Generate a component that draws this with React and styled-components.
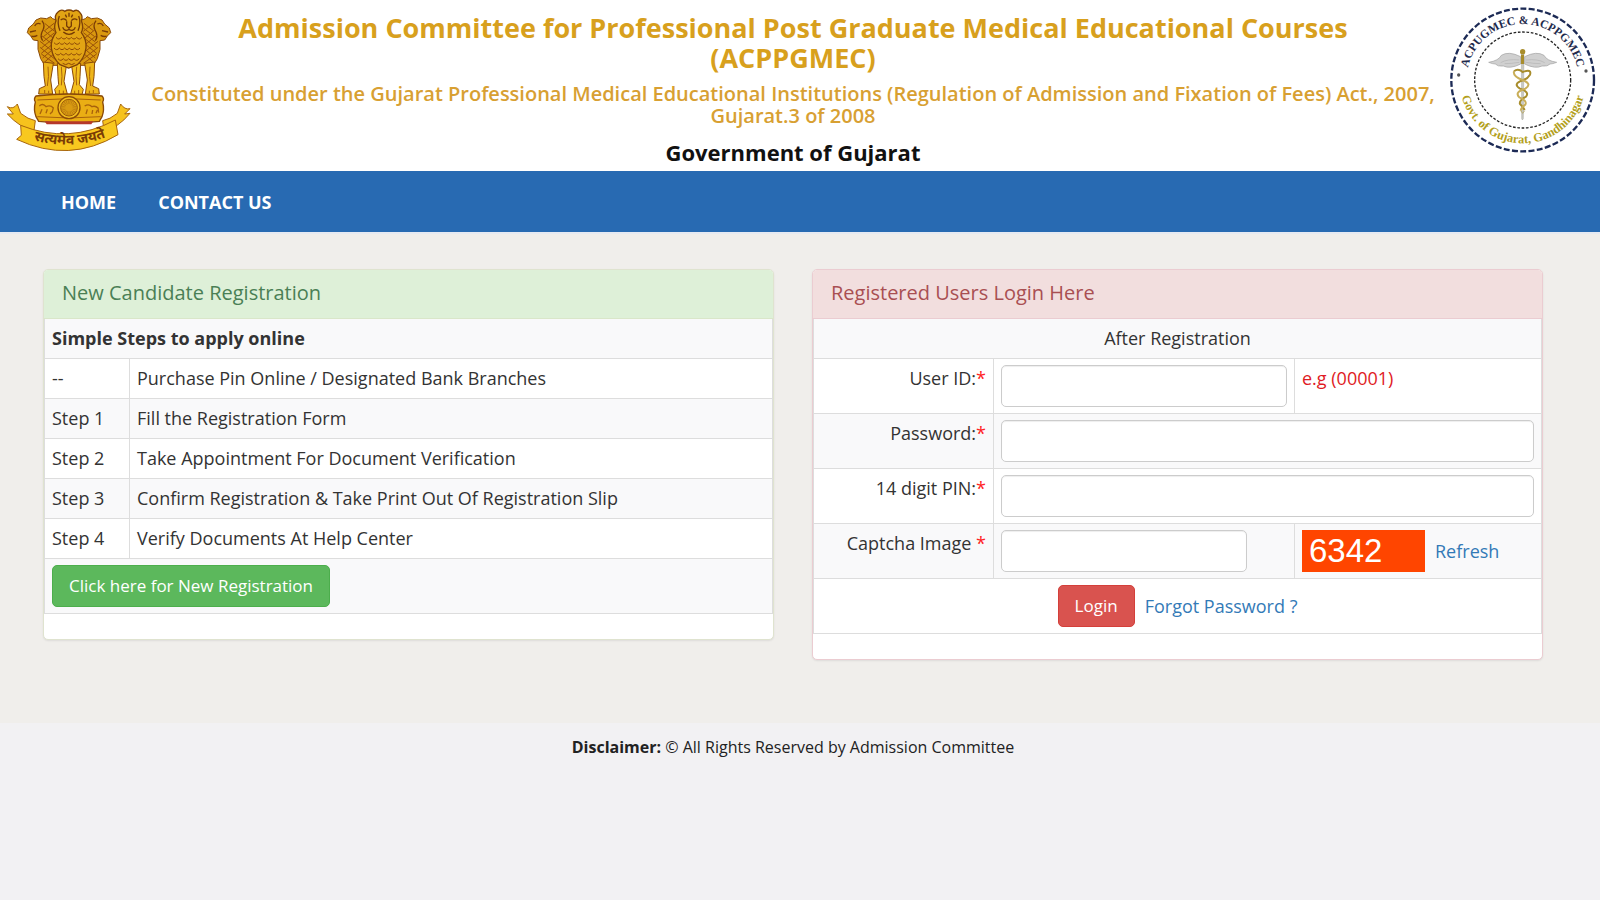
import React from 'react'
import styled, { createGlobalStyle } from 'styled-components'

const GlobalStyle = createGlobalStyle`
  * { box-sizing: border-box; }
  body {
    margin: 0;
    background: #f2f1f3;
    color: #333;
    font-family: "Open Sans", "Noto Sans", sans-serif;
    font-size: 18px;
    line-height: 27px;
  }
  input, button { font: inherit; }
`;

const Header = styled.header`
  display: flex;
  min-height: 171px;
  background: #fff;
`;

const HeaderText = styled.div`
  flex: 1;
  padding: 13px 4px 0 10px;
  text-align: center;
`;

const Title = styled.h1`
  margin: 0;
  padding: 0 20px;
  color: #d8a01d;
  font-size: 27px;
  font-weight: 700;
  line-height: 30px;
`;

const SubTitle = styled.h2`
  margin: 10px 0 0;
  color: #d8a032;
  font-size: 20px;
  font-weight: 550;
  line-height: 22px;
`;

const Government = styled.h3`
  margin: 12px 0 0;
  color: #111;
  font-size: 22px;
  font-weight: 700;
  line-height: 26px;
`;

const Logo = styled.svg`
  flex: none;
  height: 160px;
`;

const Nav = styled.nav`
  display: flex;
  gap: 42px;
  height: 63px;
  padding: 1px 61px 0;
  align-items: center;
  background: #286ab2;
  border-bottom: 2px solid #e6eaf2;
`;

const NavLink = styled.a`
  color: #fff;
  font-size: 18px;
  font-weight: 700;
  text-decoration: none;
`;

const Main = styled.main`
  display: grid;
  grid-template-columns: 1fr 1fr;
  gap: 38px;
  align-items: start;
  padding: 35px 57px 63px 43px;
  background: #f0eeeb;
`;

const Panel = styled.section`
  padding-bottom: 25px;
  background: #fff;
  border: 1px solid ${(p) => p.$line};
  border-radius: 5px;
  box-shadow: 0 1px 2px rgba(0, 0, 0, 0.08);
`;

const PanelTitle = styled.h2`
  margin: 0;
  padding: 9px 18px 12px;
  color: ${(p) => p.$color};
  background: ${(p) => p.$bg};
  border-bottom: 1px solid ${(p) => p.$line};
  border-radius: 4px 4px 0 0;
  font-size: 20px;
  font-weight: 400;
  line-height: 27px;
`;

const Table = styled.table`
  width: 100%;
  table-layout: fixed;
  border-collapse: collapse;

  tr:nth-child(odd) { background: #f9f9fa; }
  tr:first-child > * { border-top: 0; }
`;

const Cell = styled.td`
  padding: 6px 7px;
  border: 1px solid #ddd;
  text-align: ${(p) => p.$align || 'left'};
  vertical-align: top;
  font-weight: 400;
`;

const Star = styled.span`
  color: #f22;
`;

const Hint = styled.span`
  color: #e01b24;
`;

const Input = styled.input`
  display: block;
  width: ${(p) => p.$width || '100%'};
  height: 42px;
  padding: 6px 14px;
  background: #fff;
  border: 1px solid #ccc;
  border-radius: 5px;
  box-shadow: inset 0 1px 1px rgba(0, 0, 0, 0.07);
`;

const Button = styled.button`
  display: block;
  height: 42px;
  padding: 0 16px 2px;
  color: #fff;
  background: ${(p) => (p.$danger ? '#d9534f' : '#5cb85c')};
  border: 1px solid ${(p) => (p.$danger ? '#d43f3a' : '#4cae4c')};
  border-radius: 5px;
  font-size: 17px;
  cursor: pointer;
`;

const Link = styled.a`
  color: #337ab7;
  text-decoration: none;
`;

const Inline = styled.div`
  display: flex;
  gap: 10px;
  align-items: center;
  justify-content: ${(p) => (p.$center ? 'center' : 'flex-start')};
`;

const Captcha = styled.span`
  width: 123px;
  height: 42px;
  padding: 0 7px;
  color: #fff;
  background: #ff4500;
  font-family: "Liberation Sans", Arial, sans-serif;
  font-size: 33px;
  line-height: 42px;
`;

const Footer = styled.footer`
  padding: 11px 14px 24px 0;
  color: #222;
  font-size: 16px;
  text-align: center;
`;

const steps = [
  ['--', 'Purchase Pin Online / Designated Bank Branches'],
  ['Step 1', 'Fill the Registration Form'],
  ['Step 2', 'Take Appointment For Document Verification'],
  ['Step 3', 'Confirm Registration & Take Print Out Of Registration Slip'],
  ['Step 4', 'Verify Documents At Help Center'],
];

// right half of the capital, mirrored for the left one
const SideLion = () => (
  <g>
    <path d="M240 62 L256 56 L262 50 L274 56 L292 54 L306 60 L314 72 L328 84 L332 98 L322 108 L314 120 L300 122 L300 148 L292 176 L280 196 L238 196 Z" fill="#d9980f" stroke="#8a4a08" strokeWidth="3" />
    <path d="M292 72 q12 -6 18 6 M306 92 l18 4 M302 106 q10 6 18 2 M288 62 q-12 16 0 34 q6 14 -2 26" fill="none" stroke="#7a3c06" strokeWidth="4" />
    <path d="M252 70 l28 22 M250 84 l34 26 M250 98 l36 28 M250 112 l40 32 M248 126 l42 34 M246 140 l40 34 M246 156 l34 30 M280 70 l-30 24 M286 88 l-36 30 M290 106 l-42 34 M294 124 l-48 38 M294 142 l-48 38 M290 162 l-40 28" stroke="#9a520a" strokeWidth="3" />
    <path d="M254 190 L284 186 L282 230 L278 258 L296 266 L298 282 L256 282 L262 240 Z" fill="#eeb51a" stroke="#8a4a08" strokeWidth="3" />
    <path d="M270 200 q-4 30 2 58 M268 272 v8 M280 270 v10" fill="none" stroke="#a8620c" strokeWidth="3" />
    <path d="M214 192 L242 190 L240 230 L238 254 L250 268 L246 284 L212 282 L222 244 Z" fill="#f4c01e" stroke="#8a4a08" strokeWidth="3" />
    <path d="M230 200 q-4 30 0 56 M224 272 v10 M236 270 v12" fill="none" stroke="#a8620c" strokeWidth="3" />
  </g>
);

const Emblem = () => (
  <Logo width="140" viewBox="0 0 420 480" role="img" aria-label="State Emblem of India">
    <SideLion />
    <g transform="translate(414 0) scale(-1 1)"><SideLion /></g>
    <path d="M174 36 q10 -10 20 -2 q13 -8 26 0 q12 -8 20 4 q10 10 4 24 q8 20 0 36 q16 20 14 46 q-4 30 -26 50 l-26 10 l-26 -10 q-22 -20 -26 -50 q-2 -26 14 -46 q-8 -18 0 -36 q-6 -16 6 -26 Z" fill="#e2a414" stroke="#7f4207" strokeWidth="4" />
    <path d="M182 60 q10 -8 18 2 M232 60 q-10 -8 -18 2 M200 64 v14 l7 6 7 -6 v-14 M188 82 q6 14 19 6 q13 8 19 -6 M190 96 q17 14 34 0 M178 48 q-8 20 2 44 M236 48 q8 20 -2 44 M196 44 l4 8 M218 44 l-4 8 M207 38 v12" fill="none" stroke="#753a05" strokeWidth="4" />
    <path d="M168 112 q8 10 16 0 q8 10 16 0 q7 10 14 0 q8 10 16 0 q8 10 16 0 M162 128 q8 10 16 0 q8 10 16 0 q8 10 14 0 q8 10 16 0 q8 10 16 0 M162 144 q8 10 16 0 q8 10 16 0 q8 10 14 0 q8 10 16 0 q8 10 16 0 M166 160 q8 10 16 0 q8 10 16 0 q8 10 16 0 q8 10 16 0 q8 10 14 0 M174 176 q8 10 16 0 q8 10 16 0 q8 10 16 0 q8 10 16 0 M188 190 q9 8 18 0 q9 8 18 0" fill="none" stroke="#8d4808" strokeWidth="3" />
    <path d="M108 288 q98 -12 198 0 q8 8 2 18 q6 24 -2 44 l-8 14 q-92 10 -182 0 l-8 -14 q-8 -20 -2 -44 q-6 -10 2 -18 Z" fill="#eaae14" stroke="#8a4a08" strokeWidth="4" />
    <path d="M112 300 q95 -8 190 0 M112 350 q95 8 190 0" fill="none" stroke="#a8620c" strokeWidth="3" />
    <path d="M118 318 q10 -10 20 2 q14 -6 22 4 l-4 14 M120 342 l6 -14 M138 340 l4 -12 M150 342 l8 -8 M254 318 q12 -8 22 2 q10 -4 18 4 l2 14 M258 342 l4 -14 M276 342 l2 -12 M288 340 l4 -10" fill="none" stroke="#a8620c" strokeWidth="4" />
    <circle cx="207" cy="323" r="33" fill="#f2bd1f" stroke="#8a4a08" strokeWidth="4" />
    <circle cx="207" cy="323" r="25" fill="#d99b12" stroke="#9a5a0a" strokeWidth="3" />
    <circle cx="207" cy="323" r="17" fill="none" stroke="#b87a10" strokeWidth="12" strokeDasharray="2 3" />
    <path d="M134 364 h146 l-6 9 h-134 Z" fill="#b5382a" />
    <path d="M52 312 L62 340 Q84 358 106 362 L102 392 Q60 384 22 342 L40 342 L22 320 Q40 330 52 312 Z" fill="#f6c21d" stroke="#a8660c" strokeWidth="3" />
    <path d="M362 312 L352 340 Q330 358 308 362 L312 392 Q354 384 390 340 L374 342 L390 326 Q374 330 362 312 Z" fill="#f6c21d" stroke="#a8660c" strokeWidth="3" />
    <path d="M62 376 Q207 434 346 360 L354 404 Q207 492 50 418 L64 406 Z" fill="#f8c81f" stroke="#a8660c" strokeWidth="3" />
    <path id="motto" d="M66 408 Q207 464 352 398" fill="none" />
    <text fill="#7a3c06" fontSize="42" fontWeight="700" fontFamily='"Noto Sans Devanagari", "Noto Sans", sans-serif'>
      <textPath href="#motto" startOffset="50%" textAnchor="middle">सत्यमेव जयते</textPath>
    </text>
  </Logo>
);

const Wing = () => (
  <g>
    <path d="M254 170 Q290 152 312 166 Q320 182 350 187 Q338 192 330 192 Q324 200 306 198 Q286 208 254 192 Z" fill="#d0d0d0" stroke="#a0a0a0" strokeWidth="2" />
    <path d="M258 180 q36 -4 56 8 M258 187 q26 4 44 4" fill="none" stroke="#b4b4b4" strokeWidth="2" />
  </g>
);

const Seal = () => (
  <Logo width="160" viewBox="0 0 480 480" role="img" aria-label="ACPUGMEC and ACPPGMEC seal">
    <circle cx="248" cy="240" r="214" fill="none" stroke="#1c2a55" strokeWidth="7" strokeDasharray="18 7" />
    <circle cx="248" cy="240" r="144" fill="none" stroke="#222" strokeWidth="4" strokeDasharray="8 5" />
    <path id="sealTop" d="M80 240 A168 168 0 0 1 416 240" fill="none" />
    <path id="sealBottom" d="M58 240 A190 190 0 0 0 438 240" fill="none" />
    <text fill="#1f2b4d" fontFamily='"Liberation Serif", serif' fontWeight="700" fontSize="35">
      <textPath href="#sealTop" startOffset="50%" textAnchor="middle">ACPUGMEC &amp; ACPPGMEC</textPath>
    </text>
    <text fill="#b3a01c" fontFamily='"Liberation Serif", serif' fontWeight="700" fontSize="37">
      <textPath href="#sealBottom" startOffset="50%" textAnchor="middle">Govt. of Gujarat, Gandhinagar</textPath>
    </text>
    <circle cx="56" cy="225" r="5" fill="#555" />
    <circle cx="438" cy="213" r="5" fill="#555" />
    <Wing />
    <g transform="translate(496 0) scale(-1 1)"><Wing /></g>
    <path d="M244 160 h8 l-2 196 l-3 4 l-2 -4 Z" fill="#c9c9c2" stroke="#8f8f88" strokeWidth="1" />
    <path d="M222 214 Q234 204 248 216 Q276 206 270 224 Q262 238 240 244 Q220 254 240 266 Q270 276 258 290 Q236 302 240 312 Q250 322 254 330" fill="none" stroke="#a88d2c" strokeWidth="6" />
    <path d="M222 214 Q218 230 248 240 Q278 252 256 266 Q222 276 238 292 Q262 302 256 314 Q244 322 242 332" fill="none" stroke="#c9ae58" strokeWidth="6" />
    <path d="M242 332 l6 8 l6 -8" fill="none" stroke="#b7a96a" strokeWidth="3" />
    <rect x="243" y="164" width="9" height="28" fill="#a88d2c" />
    <circle cx="248" cy="155" r="8" fill="#a88d2c" />
  </Logo>
);

const Required = ({ id, children }) => (
  <Cell as="th" scope="row" $align="right">
    <label htmlFor={id}>{children}<Star>*</Star></label>
  </Cell>
);

const StepCol = styled.col`
  width: 85px;
`;

const LabelCol = styled.col`
  width: 180px;
`;

const HintCol = styled.col`
  width: 247px;
`;

const Registration = () => (
  <Panel $line="#dfe3cf">
    <PanelTitle $color="#4a7f55" $bg="#def0d8" $line="#d9e6c9">New Candidate Registration</PanelTitle>
    <Table>
      <colgroup>
        <StepCol />
        <col />
      </colgroup>
      <tbody>
        <tr>
          <Cell as="th" colSpan="2"><b>Simple Steps to apply online</b></Cell>
        </tr>
        {steps.map(([step, text]) => (
          <tr key={step}>
            <Cell>{step}</Cell>
            <Cell>{text}</Cell>
          </tr>
        ))}
        <tr>
          <Cell colSpan="2">
            <Button type="button">Click here for New Registration</Button>
          </Cell>
        </tr>
      </tbody>
    </Table>
  </Panel>
);

const Login = () => (
  <Panel as="form" $line="#ebccd1" onSubmit={(e) => e.preventDefault()}>
    <PanelTitle $color="#a94f52" $bg="#f2dede" $line="#ebccd1">Registered Users Login Here</PanelTitle>
    <Table>
      <colgroup>
        <LabelCol />
        <col />
        <HintCol />
      </colgroup>
      <tbody>
        <tr>
          <Cell colSpan="3" $align="center">After Registration</Cell>
        </tr>
        <tr>
          <Required id="userId">User ID:</Required>
          <Cell><Input id="userId" type="text" /></Cell>
          <Cell><Hint>e.g (00001)</Hint></Cell>
        </tr>
        <tr>
          <Required id="password">Password:</Required>
          <Cell colSpan="2"><Input id="password" type="password" /></Cell>
        </tr>
        <tr>
          <Required id="pin">14 digit PIN:</Required>
          <Cell colSpan="2"><Input id="pin" type="text" /></Cell>
        </tr>
        <tr>
          <Required id="captcha">Captcha Image </Required>
          <Cell><Input id="captcha" type="text" $width="246px" /></Cell>
          <Cell>
            <Inline>
              <Captcha>6342</Captcha>
              <Link href="#refresh">Refresh</Link>
            </Inline>
          </Cell>
        </tr>
        <tr>
          <Cell colSpan="3">
            <Inline $center>
              <Button type="submit" $danger>Login</Button>
              <Link href="#forgot">Forgot Password ?</Link>
            </Inline>
          </Cell>
        </tr>
      </tbody>
    </Table>
  </Panel>
);

export default function App() {
  return (
    <div>
      <GlobalStyle />
      <Header>
        <Emblem />
        <HeaderText>
          <Title>Admission Committee for Professional Post Graduate Medical Educational Courses (ACPPGMEC)</Title>
          <SubTitle>
            Constituted under the Gujarat Professional Medical Educational Institutions (Regulation of
            Admission and Fixation of Fees) Act., 2007, Gujarat.3 of 2008
          </SubTitle>
          <Government>Government of Gujarat</Government>
        </HeaderText>
        <Seal />
      </Header>
      <Nav>
        <NavLink href="#home">HOME</NavLink>
        <NavLink href="#contact">CONTACT US</NavLink>
      </Nav>
      <Main>
        <Registration />
        <Login />
      </Main>
      <Footer>
        <b>Disclaimer:</b> © All Rights Reserved by Admission Committee
      </Footer>
    </div>
  );
}
